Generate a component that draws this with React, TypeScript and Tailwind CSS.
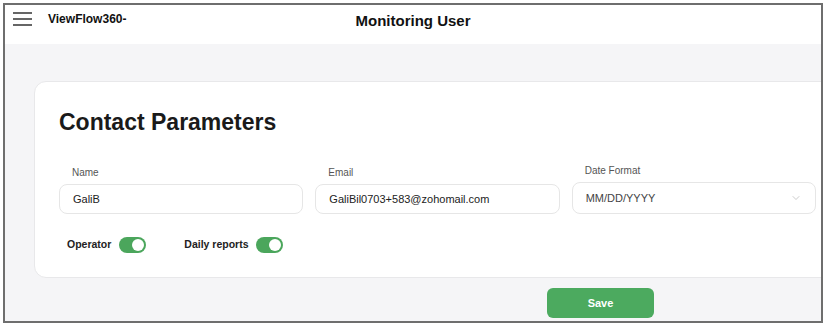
import { ChevronDown } from "lucide-react";

function Toggle() {
  return (
    <span className="inline-flex h-[16px] w-[27px] items-center justify-end rounded-full bg-[#4ba65c] pr-[2px]">
      <span className="h-[12px] w-[12px] rounded-full bg-white" />
    </span>
  );
}

function Field({
  label,
  value,
  select,
}: {
  label: string;
  value: string;
  select?: boolean;
}) {
  return (
    <div className={select ? "-mt-[2px]" : ""}>
      <label className="mb-[5px] block pl-[13px] text-[10px] leading-[12px] text-[#555]">
        {label}
      </label>
      <div
        className={`flex items-center justify-between rounded-lg border border-[#e6e6e6] bg-white px-[13px] text-[11px] ${
          select ? "h-[32px] text-[#444]" : "h-[30px] text-[#222]"
        }`}
      >
        <span>{value}</span>
        {select && <ChevronDown size={12} strokeWidth={1.2} className="text-[#aaa]" />}
      </div>
    </div>
  );
}

export default function App() {
  return (
    <div
      className="h-[327px] w-[827px] bg-white p-[3px]"
      style={{ fontFamily: '"Liberation Sans", Arial, sans-serif' }}
    >
      <div className="flex h-[320px] w-[820px] flex-col overflow-hidden border-2 border-[#6e6e6e]">
        <header className="relative flex h-[39px] shrink-0 items-start bg-white pl-[8px] pt-[7px]">
          <svg width="19" height="14" viewBox="0 0 19 14" className="mr-[16px]">
            <rect x="0" y="0" width="19" height="2" fill="#666" />
            <rect x="0" y="6" width="19" height="2" fill="#666" />
            <rect x="0" y="12" width="19" height="2" fill="#666" />
          </svg>
          <span className="text-[12px] font-bold leading-[14px] text-[#111]">ViewFlow360-</span>
          <span className="absolute left-0 right-0 top-[7px] text-center text-[15px] font-bold leading-[18px] text-[#111]">
            Monitoring User
          </span>
        </header>
        <main className="flex flex-1 flex-col bg-[#f5f5f7] pt-[37px]">
          <div className="-mr-[20px] ml-[29px] h-[197px] rounded-xl border border-[#e8e8ea] bg-white pl-[24px] pt-[25px]">
            <h1 className="text-[23px] font-bold leading-[30px] text-[#1a1a1a]">
              Contact Parameters
            </h1>
            <div className="mt-[30px] grid w-[757px] grid-cols-3 gap-x-[12px]">
              <Field label="Name" value="GaliB" />
              <Field label="Email" value="GaliBil0703+583@zohomail.com" />
              <Field label="Date Format" value="MM/DD/YYYY" select />
            </div>
            <div className="mt-[23px] flex items-center pl-[8px] text-[10.5px] font-bold text-[#222]">
              <span className="mr-[8px]">Operator</span>
              <Toggle />
              <span className="ml-[38px] mr-[7px]">Daily reports</span>
              <Toggle />
            </div>
          </div>
          <div className="mt-[10px] flex pl-[542px]">
            <button className="h-[30px] w-[107px] rounded-md bg-[#4caa5f] text-[11px] font-bold text-white">
              Save
            </button>
          </div>
        </main>
      </div>
    </div>
  );
}
